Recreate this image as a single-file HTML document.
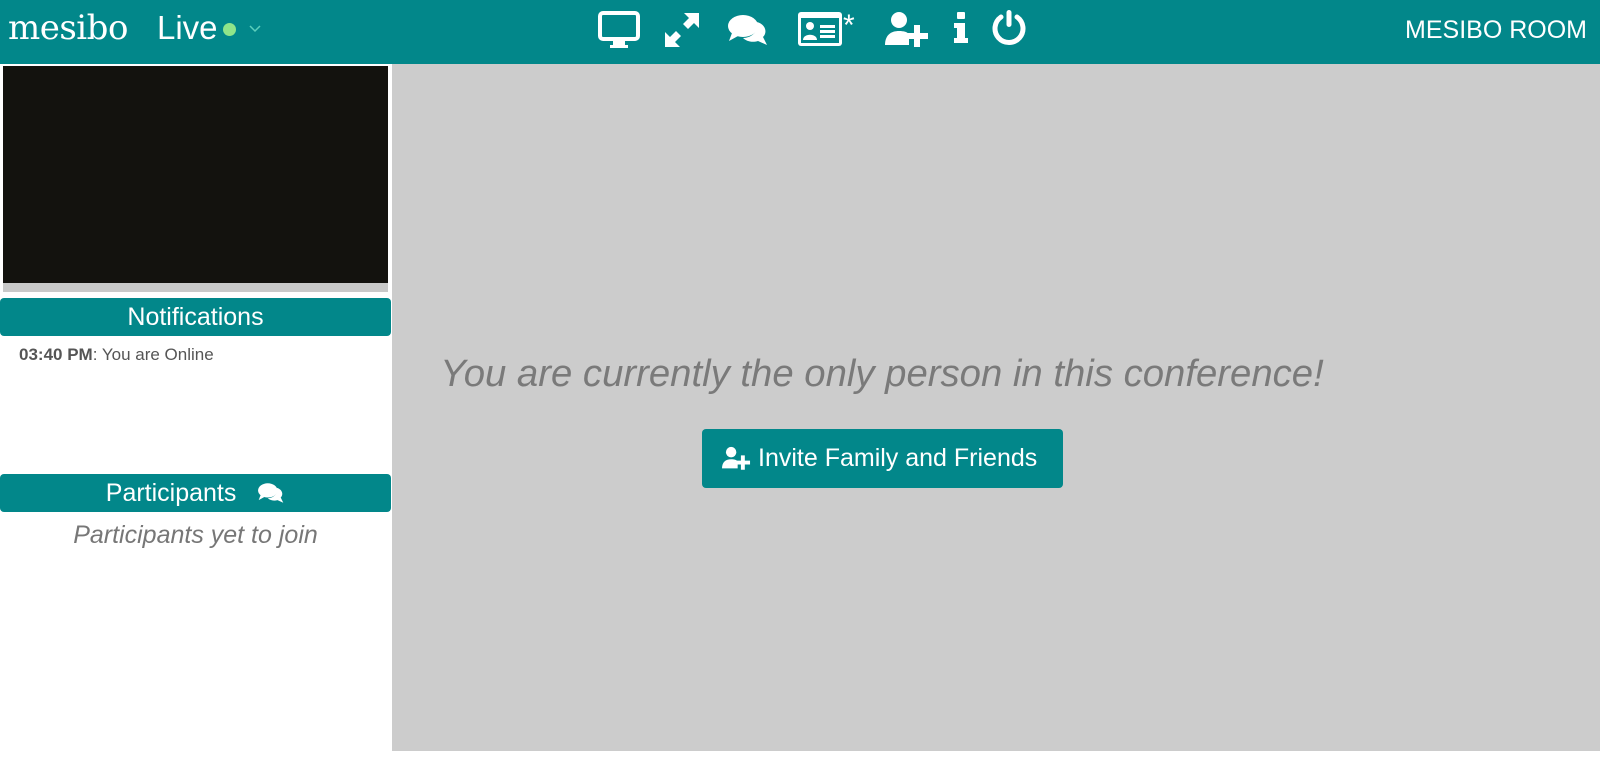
<!DOCTYPE html>
<html><head><style>
body{margin:0;width:1600px;height:766px;background:#fff;font-family:"Liberation Sans",sans-serif;position:relative;overflow:hidden}
.hdr{position:absolute;left:0;top:0;width:1600px;height:64px;background:#02878a;color:#fff}
.abs{position:absolute}
.bar{position:absolute;left:0;width:391px;height:38px;background:#02878a;border-radius:4px;color:#fff;font-size:25px;text-align:center;line-height:38px}
</style></head><body>
<div class="hdr">
<div class="abs" style="left:8px;top:8px;font-family:'DejaVu Serif',serif;font-size:34px;letter-spacing:-0.5px">mesibo</div>
<div class="abs" style="left:157px;top:9px;font-size:33px">Live</div>
<div class="abs" style="left:223px;top:23px;width:13px;height:13px;border-radius:50%;background:#8fe58a"></div>
<svg class="abs" style="left:249px;top:25px" width="12" height="8"><path d="M1 1l5 5 5-5" stroke="#9fd" stroke-opacity=".6" fill="none" stroke-width="1.5"/></svg>
<svg class="abs" style="left:598px;top:10px" width="44" height="40" viewBox="0 0 44 40"><rect x="2" y="3" width="38" height="26" rx="3" fill="none" stroke="#fff" stroke-width="4"/><rect x="15" y="30" width="12" height="8" fill="#fff"/><rect x="12" y="35" width="18" height="3" fill="#fff"/></svg>
<svg class="abs" style="left:664px;top:12px" width="36" height="36" viewBox="0 0 36 36" fill="#fff"><path d="M20 1h15v15l-5-5-6 6-5-5 6-6z M16 35H1V20l5 5 6-6 5 5-6 6z"/></svg>
<svg class="abs" style="left:727px;top:13px" width="42" height="34" viewBox="0 0 42 34" fill="#fff"><ellipse cx="16" cy="13" rx="15" ry="11"/><path d="M5 20l-3 8 9-5z"/><path d="M30 9c8 2 11 10 6 15l4 8-9-4c-6 2-12 0-15-3 9 0 16-7 14-16z"/></svg>
<svg class="abs" style="left:797px;top:11px" width="48" height="36" viewBox="0 0 48 36"><rect x="1" y="1" width="44" height="34" rx="3" fill="#fff"/><rect x="4" y="7" width="38" height="25" fill="#02878a"/><circle cx="13" cy="15" r="4" fill="#fff"/><path d="M6 29c0-7 14-7 14 0z" fill="#fff"/><rect x="23" y="14" width="15" height="3" fill="#fff"/><rect x="23" y="19" width="15" height="3" fill="#fff"/><rect x="23" y="24" width="15" height="3" fill="#fff"/></svg>
<div class="abs" style="left:843px;top:9px;font-size:30px">*</div>
<svg class="abs" style="left:885px;top:11px" width="46" height="36" viewBox="0 0 46 36" fill="#fff"><circle cx="14" cy="9" r="8"/><path d="M0 34c0-10 6-14 14-14 5 0 8 1 10 3v11z"/><path d="M29 14h6v8h8v6h-8v8h-6v-8h-8v-6h8z"/></svg>
<svg class="abs" style="left:953px;top:12px" width="16" height="32" viewBox="0 0 16 32" fill="#fff"><rect x="4" y="0" width="8" height="7" rx="1"/><path d="M1 11h11v15h3v5H1v-5h3v-10H1z"/></svg>
<svg class="abs" style="left:991px;top:9px" width="36" height="38" viewBox="0 0 36 38"><path d="M10 8a14 14 0 1 0 16 0" fill="none" stroke="#fff" stroke-width="5" stroke-linecap="round"/><rect x="15.5" y="1" width="5" height="17" rx="2.5" fill="#fff"/></svg>
<div class="abs" style="right:13px;top:16px;font-size:25px">MESIBO ROOM</div>
</div>
<div class="abs" style="left:3px;top:66px;width:385px;height:217px;background:#13120e"></div>
<div class="abs" style="left:3px;top:283px;width:385px;height:9px;background:#c9c9c9"></div>
<div class="bar" style="top:298px">Notifications</div>
<div class="abs" style="left:19px;top:345px;font-size:17px;color:#555"><b>03:40 PM</b>: You are Online</div>
<div class="bar" style="top:474px">Participants &nbsp;&nbsp;<svg width="28" height="22" viewBox="0 0 42 34" fill="#fff" style="vertical-align:-3px"><ellipse cx="16" cy="13" rx="15" ry="11"/><path d="M5 20l-3 8 9-5z"/><path d="M30 9c8 2 11 10 6 15l4 8-9-4c-6 2-12 0-15-3 9 0 16-7 14-16z"/></svg></div>
<div class="abs" style="left:0;width:391px;top:521px;text-align:center;font-size:25px;font-style:italic;color:#777">Participants yet to join</div>
<div class="abs" style="left:392px;top:64px;width:1208px;height:687px;background:#cccccc"></div>
<div class="abs" style="left:282px;width:1200px;top:352px;text-align:center;font-size:38.3px;font-style:italic;color:#7a7a7a;white-space:nowrap">You are currently the only person in this conference!</div>
<div class="abs" style="left:702px;top:429px;width:361px;height:59px;background:#02878a;border-radius:4px;color:#fff;font-size:25px;line-height:59px;white-space:nowrap"><svg class="abs" style="left:20px;top:17px" width="30" height="24" viewBox="0 0 46 36" fill="#fff"><circle cx="14" cy="9" r="8"/><path d="M0 34c0-10 6-14 14-14 5 0 8 1 10 3v11z"/><path d="M29 14h6v8h8v6h-8v8h-6v-8h-8v-6h8z"/></svg><span class="abs" style="left:56px;top:0">Invite Family and Friends</span></div>
</body></html>
